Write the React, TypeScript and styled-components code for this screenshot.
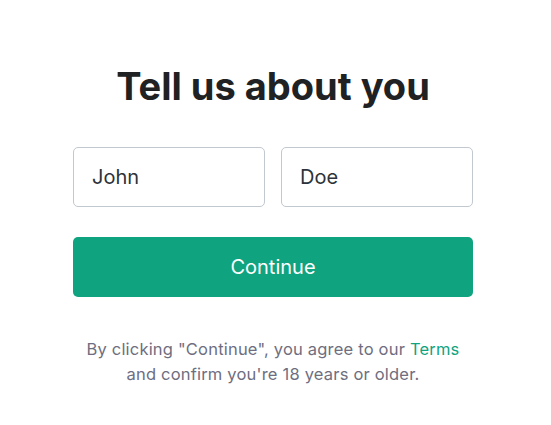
import React from "react";
import styled, { createGlobalStyle } from "styled-components";

const Global = createGlobalStyle`
  html, body { margin: 0; padding: 0; background: #ffffff; }
  body { font-family: Inter, "Noto Sans", sans-serif; }
`;

const Page = styled.main`
  width: 551px;
  height: 425px;
  display: flex;
  justify-content: center;
  box-sizing: border-box;
  padding: 62px 0 0;
`;

const Card = styled.section`
  width: 400px;
  margin-left: -5px;
  display: flex;
  flex-direction: column;
  align-items: stretch;
`;

const Title = styled.h1`
  margin: 0 0 37px;
  text-align: center;
  font-size: 38px;
  line-height: 48px;
  font-weight: 700;
  color: #202123;
  letter-spacing: 0;
`;

const Row = styled.div`
  display: grid;
  grid-template-columns: 1fr 1fr;
  gap: 16px;
`;

const Field = styled.input`
  box-sizing: border-box;
  height: 60px;
  width: 100%;
  border: 1px solid #c2c8d0;
  border-radius: 5px;
  padding: 0 18px;
  font-family: inherit;
  font-size: 20px;
  color: #2d333a;
  background: #fff;
  outline: none;
`;

const Button = styled.button`
  margin-top: 30px;
  height: 60px;
  border: none;
  border-radius: 5px;
  background: #10a37f;
  color: #ffffff;
  font-family: inherit;
  font-size: 20px;
  font-weight: 400;
  cursor: pointer;
`;

const Note = styled.p`
  margin: 40px 0 0;
  text-align: center;
  font-size: 16.5px;
  line-height: 25px;
  letter-spacing: 0.2px;
  color: #6e6e80;
`;

const Link = styled.a`
  color: #10a37f;
  text-decoration: none;
`;

export default function App() {
  return (
    <>
      <Global />
      <Page>
        <Card>
          <Title>Tell us about you</Title>
          <Row>
            <Field defaultValue="John" />
            <Field defaultValue="Doe" />
          </Row>
          <Button>Continue</Button>
          <Note>
            By clicking "Continue", you agree to our <Link href="#">Terms</Link>
            <br />
            and confirm you're 18 years or older.
          </Note>
        </Card>
      </Page>
    </>
  );
}
